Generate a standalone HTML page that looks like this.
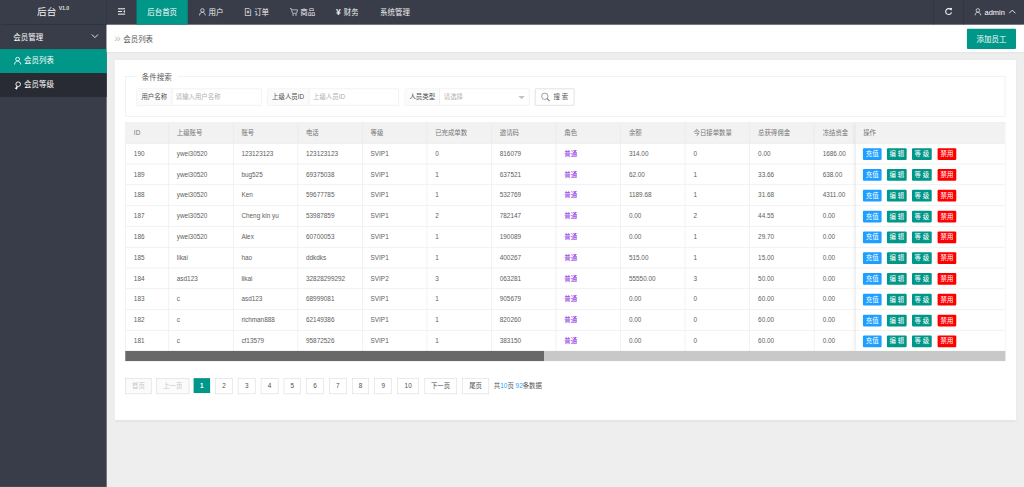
<!DOCTYPE html><html lang="zh"><head><meta charset="utf-8"><title>后台</title><style>
*{box-sizing:border-box;margin:0;padding:0}
html,body{width:1024px;height:487px;overflow:hidden;background:#eee}
body{font-family:"Liberation Sans","Noto Sans CJK SC",sans-serif;font-size:14px;color:#333;}
#root{position:absolute;left:0;top:0;width:1920px;height:913px;transform:scale(0.533333);transform-origin:0 0;background:#eee;overflow:hidden}
.abs{position:absolute}
.header{position:absolute;left:0;top:0;width:1920px;height:46px;background:#393D49;box-shadow:0 1px 2px rgba(0,0,0,.25);z-index:5}
.logo{position:absolute;left:0;top:0;width:200px;height:46px;color:#fff;border-right:1px solid #30333d}
.logo .t{position:absolute;left:69.5px;top:7px;font-size:18px;line-height:30px;color:#f2f2f2;white-space:nowrap}
.logo .v{position:absolute;left:110px;top:10px;font-size:10px;font-weight:bold;line-height:12px;color:#ddd;letter-spacing:-0.3px}
.nav{position:absolute;top:0;height:46px;line-height:47px;color:#f0f0f0;font-size:14px;white-space:nowrap}
.nav.act{background:#009688;color:#fff}
.side{position:absolute;left:0;top:0;width:200px;height:913px;background:#393D49;padding-top:46px}
.side .m{position:absolute;left:0;width:200px;height:45px;line-height:49px;color:#fff;font-size:14px;white-space:nowrap}
.bar{position:absolute;left:200px;top:40px;width:1720px;height:57.5px;background:#fff;box-shadow:0 1px 3px rgba(0,0,0,.18)}
.card{position:absolute;left:215px;top:112px;width:1690px;height:676px;background:#fff;box-shadow:0 1px 4px rgba(0,0,0,.12)}
.fs{position:absolute;left:235px;top:143px;width:1650px;height:76px;border:1px solid #e6e6e6}
.lg{position:absolute;left:256px;top:132.5px;width:78px;height:24px;background:#fff;line-height:24px;font-size:14px;color:#5a5a5a;padding-left:10px;white-space:nowrap}
.grp{position:absolute;top:165.5px;height:32px;border:1px solid #e6e6e6;border-radius:2px;background:#fff}
.grp .lb{position:absolute;left:0;top:0;height:30px;line-height:30px;background:#fbfbfb;border-right:1px solid #e6e6e6;font-size:12px;color:#505050;text-align:center;white-space:nowrap}
.grp .ph{position:absolute;top:0;height:30px;line-height:30px;font-size:12px;color:#b0b0b0;white-space:nowrap}
.tbl{position:absolute;left:235px;top:228.6px;width:1650px;height:448px;border:1px solid #e6e6e6;overflow:hidden;background:#fff}
.tr{position:absolute;left:0;width:1650px;height:39px;border-bottom:1px solid #e6e6e6}
.th{background:#f2f2f2}
.td{position:absolute;top:0;height:38px;line-height:38px;padding-left:15px;font-size:12px;color:#606060;border-right:1px solid #e6e6e6;white-space:nowrap;overflow:hidden}
.th .td{color:#757575}
.pu{color:#8a2be2}
.fix{position:absolute;left:1368px;top:0;width:281px;height:429px;background:#fff;box-shadow:-1px 0 8px rgba(0,0,0,.12);border-left:1px solid #e6e6e6}
.fix .r{position:absolute;left:0;width:281px;height:39px;border-bottom:1px solid #e6e6e6}
.b{position:absolute;top:9px;height:22px;line-height:22px;font-size:12px;color:#fff;text-align:center;border-radius:2px;white-space:nowrap}
.pg{position:absolute;top:708.6px;height:30px;line-height:28px;border:1px solid #d8d8d8;font-size:12px;color:#505050;text-align:center;background:#fff;white-space:nowrap}
.pg.dis{color:#c6c6c6;background:#fbfbfb}
</style></head><body><div id="root">
<div class="side">
<div class="m" style="top:46px;height:46px;line-height:48px"><span class="abs" style="left:25px">会员管理</span><svg class="abs" style="left:171px;top:17px" width="14" height="10" viewBox="0 0 14 10"><path d="M1 1.5 L7 7.5 L13 1.5" fill="none" stroke="#f4f4f4" stroke-width="1.7"/></svg></div>
<div class="m" style="top:92px;background:#009688;line-height:45px"><svg class="abs" style="left:25.5px;top:14px" width="14" height="16.2" viewBox="0 0 13 15"><circle cx="6.5" cy="4.5" r="3.3" fill="none" stroke="#fff" stroke-width="1.5"/><path d="M1 14 C1.5 9.5 4 8 6.5 8 C9 8 11.500 9.500 12 14" fill="none" stroke="#fff" stroke-width="1.5"/></svg><span class="abs" style="left:45px">会员列表</span></div>
<div class="m" style="top:137px;background:#282B33;line-height:45px"><svg class="abs" style="left:25.5px;top:14.5px" width="14" height="17.2" viewBox="0 0 13 16"><circle cx="7.5" cy="5.5" r="4" fill="none" stroke="#fff" stroke-width="1.6"/><path d="M4.500 9 L1.500 14 L4 13.500 L5 15.500 L7 10" fill="#fff" stroke="none"/></svg><span class="abs" style="left:45px">会员等级</span></div>
</div>
<div class="header">
<div class="logo"><span class="t">后台</span><span class="v">V1.0</span></div>
<svg class="abs" style="left:221px;top:15px" width="14" height="13" viewBox="0 0 14 13"><rect x="0" y="0.5" width="14" height="2" fill="#eee"/><rect x="0" y="5.500" width="8" height="2" fill="#eee"/><rect x="0" y="10.500" width="14" height="2" fill="#eee"/><path d="M13.500 3.800 L13.500 9.200 L10 6.500 Z" fill="#eee"/></svg>
<div class="nav act" style="left:256px;width:96px;text-align:center">后台首页</div>
<svg class="abs" style="left:373px;top:15px" width="13" height="15" viewBox="0 0 13 15"><circle cx="6.5" cy="4.500" r="3.300" fill="none" stroke="#e6e6e6" stroke-width="1.500"/><path d="M1 14 C1.500 9.500 4 8 6.500 8 C9 8 11.500 9.500 12 14" fill="none" stroke="#e6e6e6" stroke-width="1.500"/></svg>
<div class="nav" style="left:391px">用户</div>
<svg class="abs" style="left:458px;top:15px" width="14" height="15" viewBox="0 0 14 15"><path d="M1.800 0.800 H9 L12.200 4 V14.200 H1.800 Z" fill="none" stroke="#e6e6e6" stroke-width="1.500"/><rect x="4.500" y="5" width="5" height="5" fill="#e6e6e6" opacity=".7"/></svg>
<div class="nav" style="left:476.5px">订单</div>
<svg class="abs" style="left:543px;top:15px" width="16" height="15" viewBox="0 0 16 15"><path d="M0.500 1 H3 L5.500 10 H13 L15 3.500 H4" fill="none" stroke="#e6e6e6" stroke-width="1.300"/><circle cx="6.500" cy="13" r="1.300" fill="#e6e6e6"/><circle cx="12" cy="13" r="1.300" fill="#e6e6e6"/></svg>
<div class="nav" style="left:563px">商品</div>
<div class="nav" style="left:630px;font-weight:bold;font-size:16px">¥</div>
<div class="nav" style="left:644.5px">财务</div>
<div class="nav" style="left:712.5px">系统管理</div>
<div class="abs" style="left:1750px;top:0;width:1px;height:46px;background:#2f323c"></div>
<div class="abs" style="left:1806px;top:0;width:1px;height:46px;background:#2f323c"></div>
<svg class="abs" style="left:1771px;top:14px" width="15" height="15" viewBox="0 0 15 15"><path d="M12.200 4.500 A5.500 5.500 0 1 0 13 9" fill="none" stroke="#f0f0f0" stroke-width="2"/><path d="M9 0.500 L14 1 L13 6 Z" fill="#f0f0f0"/></svg>
<svg class="abs" style="left:1827px;top:15px" width="13" height="15" viewBox="0 0 13 15"><circle cx="6.5" cy="4.500" r="3.300" fill="none" stroke="#e6e6e6" stroke-width="1.500"/><path d="M1 14 C1.500 9.500 4 8 6.500 8 C9 8 11.500 9.500 12 14" fill="none" stroke="#e6e6e6" stroke-width="1.500"/></svg>
<div class="nav" style="left:1846px;color:#fff">admin</div>
<svg class="abs" style="left:1891px;top:17px" width="14" height="10" viewBox="0 0 14 10"><path d="M1 8 L7 2 L13 8" fill="none" stroke="#f4f4f4" stroke-width="1.700"/></svg>
</div>
<div class="bar"><span class="abs" style="left:14px;top:6px;line-height:49px;font-size:22px;color:#c4c4c4">»</span><span class="abs" style="left:31px;top:6px;line-height:54px;font-size:14px;color:#555;white-space:nowrap">会员列表</span>
<div class="abs" style="left:1613px;top:14px;width:92px;height:38px;line-height:39px;background:#009688;color:#fff;text-align:center;font-size:14px;border-radius:2px">添加员工</div></div>
<div class="card"></div>
<div class="fs"></div><div class="lg">条件搜索</div>
<div class="grp" style="left:256px;width:234.500px"><div class="lb" style="width:65.500px">用户名称</div><div class="ph" style="left:72.5px">请输入用户名称</div></div>
<div class="grp" style="left:501px;width:246.500px"><div class="lb" style="width:77.500px">上级人员ID</div><div class="ph" style="left:85px">上级人员ID</div></div>
<div class="grp" style="left:758.500px;width:234.500px"><div class="lb" style="width:65.500px">人员类型</div><div class="ph" style="left:72.5px">请选择</div><div class="abs" style="left:212px;top:13px;width:0;height:0;border:6px solid transparent;border-top-color:#c2c2c2"></div></div>
<div class="abs" style="left:1003px;top:165.500px;width:74px;height:32px;border:1px solid #c9c9c9;border-radius:2px;background:#fff"><svg class="abs" style="left:10px;top:6px" width="18" height="18" viewBox="0 0 18 18"><circle cx="7.500" cy="7.500" r="6" fill="none" stroke="#777" stroke-width="1.300"/><path d="M11.500 11.500 L16.500 16.500" stroke="#777" stroke-width="2"/></svg><span class="abs" style="left:34px;top:0;line-height:30px;font-size:12px;color:#555;white-space:nowrap">搜 索</span></div>
<div class="tbl">
<div class="tr th" style="top:0px"><div class="td" style="left:0.0px;width:80.5px">ID</div><div class="td" style="left:80.5px;width:121.1px">上级账号</div><div class="td" style="left:201.6px;width:121.1px">账号</div><div class="td" style="left:322.7px;width:121.1px">电话</div><div class="td" style="left:443.8px;width:121.1px">等级</div><div class="td" style="left:564.9px;width:121.1px">已完成单数</div><div class="td" style="left:686.0px;width:121.1px">邀请码</div><div class="td" style="left:807.1px;width:121.1px">角色</div><div class="td" style="left:928.2px;width:121.1px">余额</div><div class="td" style="left:1049.3px;width:121.1px">今日接单数量</div><div class="td" style="left:1170.4px;width:121.1px">总获得佣金</div><div class="td" style="left:1291.5px;width:121.1px">冻结资金</div></div>
<div class="tr " style="top:39px"><div class="td" style="left:0.0px;width:80.5px">190</div><div class="td" style="left:80.5px;width:121.1px">ywei30520</div><div class="td" style="left:201.6px;width:121.1px">123123123</div><div class="td" style="left:322.7px;width:121.1px">123123123</div><div class="td" style="left:443.8px;width:121.1px">SVIP1</div><div class="td" style="left:564.9px;width:121.1px">0</div><div class="td" style="left:686.0px;width:121.1px">816079</div><div class="td pu" style="left:807.1px;width:121.1px">普通</div><div class="td" style="left:928.2px;width:121.1px">314.00</div><div class="td" style="left:1049.3px;width:121.1px">0</div><div class="td" style="left:1170.4px;width:121.1px">0.00</div><div class="td" style="left:1291.5px;width:121.1px">1686.00</div></div>
<div class="tr " style="top:78px"><div class="td" style="left:0.0px;width:80.5px">189</div><div class="td" style="left:80.5px;width:121.1px">ywei30520</div><div class="td" style="left:201.6px;width:121.1px">bug525</div><div class="td" style="left:322.7px;width:121.1px">69375038</div><div class="td" style="left:443.8px;width:121.1px">SVIP1</div><div class="td" style="left:564.9px;width:121.1px">1</div><div class="td" style="left:686.0px;width:121.1px">637521</div><div class="td pu" style="left:807.1px;width:121.1px">普通</div><div class="td" style="left:928.2px;width:121.1px">62.00</div><div class="td" style="left:1049.3px;width:121.1px">1</div><div class="td" style="left:1170.4px;width:121.1px">33.66</div><div class="td" style="left:1291.5px;width:121.1px">638.00</div></div>
<div class="tr " style="top:117px"><div class="td" style="left:0.0px;width:80.5px">188</div><div class="td" style="left:80.5px;width:121.1px">ywei30520</div><div class="td" style="left:201.6px;width:121.1px">Ken</div><div class="td" style="left:322.7px;width:121.1px">59677785</div><div class="td" style="left:443.8px;width:121.1px">SVIP1</div><div class="td" style="left:564.9px;width:121.1px">1</div><div class="td" style="left:686.0px;width:121.1px">532769</div><div class="td pu" style="left:807.1px;width:121.1px">普通</div><div class="td" style="left:928.2px;width:121.1px">1189.68</div><div class="td" style="left:1049.3px;width:121.1px">1</div><div class="td" style="left:1170.4px;width:121.1px">31.68</div><div class="td" style="left:1291.5px;width:121.1px">4311.00</div></div>
<div class="tr " style="top:156px"><div class="td" style="left:0.0px;width:80.5px">187</div><div class="td" style="left:80.5px;width:121.1px">ywei30520</div><div class="td" style="left:201.6px;width:121.1px">Cheng kin yu</div><div class="td" style="left:322.7px;width:121.1px">53987859</div><div class="td" style="left:443.8px;width:121.1px">SVIP1</div><div class="td" style="left:564.9px;width:121.1px">2</div><div class="td" style="left:686.0px;width:121.1px">782147</div><div class="td pu" style="left:807.1px;width:121.1px">普通</div><div class="td" style="left:928.2px;width:121.1px">0.00</div><div class="td" style="left:1049.3px;width:121.1px">2</div><div class="td" style="left:1170.4px;width:121.1px">44.55</div><div class="td" style="left:1291.5px;width:121.1px">0.00</div></div>
<div class="tr " style="top:195px"><div class="td" style="left:0.0px;width:80.5px">186</div><div class="td" style="left:80.5px;width:121.1px">ywei30520</div><div class="td" style="left:201.6px;width:121.1px">Alex</div><div class="td" style="left:322.7px;width:121.1px">60700053</div><div class="td" style="left:443.8px;width:121.1px">SVIP1</div><div class="td" style="left:564.9px;width:121.1px">1</div><div class="td" style="left:686.0px;width:121.1px">190089</div><div class="td pu" style="left:807.1px;width:121.1px">普通</div><div class="td" style="left:928.2px;width:121.1px">0.00</div><div class="td" style="left:1049.3px;width:121.1px">1</div><div class="td" style="left:1170.4px;width:121.1px">29.70</div><div class="td" style="left:1291.5px;width:121.1px">0.00</div></div>
<div class="tr " style="top:234px"><div class="td" style="left:0.0px;width:80.5px">185</div><div class="td" style="left:80.5px;width:121.1px">likai</div><div class="td" style="left:201.6px;width:121.1px">hao</div><div class="td" style="left:322.7px;width:121.1px">ddkdks</div><div class="td" style="left:443.8px;width:121.1px">SVIP1</div><div class="td" style="left:564.9px;width:121.1px">1</div><div class="td" style="left:686.0px;width:121.1px">400267</div><div class="td pu" style="left:807.1px;width:121.1px">普通</div><div class="td" style="left:928.2px;width:121.1px">515.00</div><div class="td" style="left:1049.3px;width:121.1px">1</div><div class="td" style="left:1170.4px;width:121.1px">15.00</div><div class="td" style="left:1291.5px;width:121.1px">0.00</div></div>
<div class="tr " style="top:273px"><div class="td" style="left:0.0px;width:80.5px">184</div><div class="td" style="left:80.5px;width:121.1px">asd123</div><div class="td" style="left:201.6px;width:121.1px">likai</div><div class="td" style="left:322.7px;width:121.1px">32828299292</div><div class="td" style="left:443.8px;width:121.1px">SVIP2</div><div class="td" style="left:564.9px;width:121.1px">3</div><div class="td" style="left:686.0px;width:121.1px">063281</div><div class="td pu" style="left:807.1px;width:121.1px">普通</div><div class="td" style="left:928.2px;width:121.1px">55550.00</div><div class="td" style="left:1049.3px;width:121.1px">3</div><div class="td" style="left:1170.4px;width:121.1px">50.00</div><div class="td" style="left:1291.5px;width:121.1px">0.00</div></div>
<div class="tr " style="top:312px"><div class="td" style="left:0.0px;width:80.5px">183</div><div class="td" style="left:80.5px;width:121.1px">c</div><div class="td" style="left:201.6px;width:121.1px">asd123</div><div class="td" style="left:322.7px;width:121.1px">68999081</div><div class="td" style="left:443.8px;width:121.1px">SVIP1</div><div class="td" style="left:564.9px;width:121.1px">1</div><div class="td" style="left:686.0px;width:121.1px">905679</div><div class="td pu" style="left:807.1px;width:121.1px">普通</div><div class="td" style="left:928.2px;width:121.1px">0.00</div><div class="td" style="left:1049.3px;width:121.1px">0</div><div class="td" style="left:1170.4px;width:121.1px">60.00</div><div class="td" style="left:1291.5px;width:121.1px">0.00</div></div>
<div class="tr " style="top:351px"><div class="td" style="left:0.0px;width:80.5px">182</div><div class="td" style="left:80.5px;width:121.1px">c</div><div class="td" style="left:201.6px;width:121.1px">richman888</div><div class="td" style="left:322.7px;width:121.1px">62149386</div><div class="td" style="left:443.8px;width:121.1px">SVIP1</div><div class="td" style="left:564.9px;width:121.1px">1</div><div class="td" style="left:686.0px;width:121.1px">820260</div><div class="td pu" style="left:807.1px;width:121.1px">普通</div><div class="td" style="left:928.2px;width:121.1px">0.00</div><div class="td" style="left:1049.3px;width:121.1px">0</div><div class="td" style="left:1170.4px;width:121.1px">60.00</div><div class="td" style="left:1291.5px;width:121.1px">0.00</div></div>
<div class="tr " style="top:390px"><div class="td" style="left:0.0px;width:80.5px">181</div><div class="td" style="left:80.5px;width:121.1px">c</div><div class="td" style="left:201.6px;width:121.1px">cf13579</div><div class="td" style="left:322.7px;width:121.1px">95872526</div><div class="td" style="left:443.8px;width:121.1px">SVIP1</div><div class="td" style="left:564.9px;width:121.1px">1</div><div class="td" style="left:686.0px;width:121.1px">383150</div><div class="td pu" style="left:807.1px;width:121.1px">普通</div><div class="td" style="left:928.2px;width:121.1px">0.00</div><div class="td" style="left:1049.3px;width:121.1px">0</div><div class="td" style="left:1170.4px;width:121.1px">60.00</div><div class="td" style="left:1291.5px;width:121.1px">0.00</div></div>
<div class="fix">
<div class="r" style="top:0;background:#f2f2f2"><span class="abs" style="left:13.5px;line-height:38px;font-size:12px;color:#757575">操作</span></div>
<div class="r" style="top:39px"><span class="b" style="left:13px;width:35px;background:#1E9FFF">充值</span><span class="b" style="left:58px;width:37px;background:#009688">编 辑</span><span class="b" style="left:105px;width:37px;background:#009688">等 级</span><span class="b" style="left:153px;width:35px;background:#FF0000">禁用</span></div>
<div class="r" style="top:78px"><span class="b" style="left:13px;width:35px;background:#1E9FFF">充值</span><span class="b" style="left:58px;width:37px;background:#009688">编 辑</span><span class="b" style="left:105px;width:37px;background:#009688">等 级</span><span class="b" style="left:153px;width:35px;background:#FF0000">禁用</span></div>
<div class="r" style="top:117px"><span class="b" style="left:13px;width:35px;background:#1E9FFF">充值</span><span class="b" style="left:58px;width:37px;background:#009688">编 辑</span><span class="b" style="left:105px;width:37px;background:#009688">等 级</span><span class="b" style="left:153px;width:35px;background:#FF0000">禁用</span></div>
<div class="r" style="top:156px"><span class="b" style="left:13px;width:35px;background:#1E9FFF">充值</span><span class="b" style="left:58px;width:37px;background:#009688">编 辑</span><span class="b" style="left:105px;width:37px;background:#009688">等 级</span><span class="b" style="left:153px;width:35px;background:#FF0000">禁用</span></div>
<div class="r" style="top:195px"><span class="b" style="left:13px;width:35px;background:#1E9FFF">充值</span><span class="b" style="left:58px;width:37px;background:#009688">编 辑</span><span class="b" style="left:105px;width:37px;background:#009688">等 级</span><span class="b" style="left:153px;width:35px;background:#FF0000">禁用</span></div>
<div class="r" style="top:234px"><span class="b" style="left:13px;width:35px;background:#1E9FFF">充值</span><span class="b" style="left:58px;width:37px;background:#009688">编 辑</span><span class="b" style="left:105px;width:37px;background:#009688">等 级</span><span class="b" style="left:153px;width:35px;background:#FF0000">禁用</span></div>
<div class="r" style="top:273px"><span class="b" style="left:13px;width:35px;background:#1E9FFF">充值</span><span class="b" style="left:58px;width:37px;background:#009688">编 辑</span><span class="b" style="left:105px;width:37px;background:#009688">等 级</span><span class="b" style="left:153px;width:35px;background:#FF0000">禁用</span></div>
<div class="r" style="top:312px"><span class="b" style="left:13px;width:35px;background:#1E9FFF">充值</span><span class="b" style="left:58px;width:37px;background:#009688">编 辑</span><span class="b" style="left:105px;width:37px;background:#009688">等 级</span><span class="b" style="left:153px;width:35px;background:#FF0000">禁用</span></div>
<div class="r" style="top:351px"><span class="b" style="left:13px;width:35px;background:#1E9FFF">充值</span><span class="b" style="left:58px;width:37px;background:#009688">编 辑</span><span class="b" style="left:105px;width:37px;background:#009688">等 级</span><span class="b" style="left:153px;width:35px;background:#FF0000">禁用</span></div>
<div class="r" style="top:390px"><span class="b" style="left:13px;width:35px;background:#1E9FFF">充值</span><span class="b" style="left:58px;width:37px;background:#009688">编 辑</span><span class="b" style="left:105px;width:37px;background:#009688">等 级</span><span class="b" style="left:153px;width:35px;background:#FF0000">禁用</span></div>
</div>
</div>
<div class="abs" style="left:235px;top:658px;width:1650px;height:19px;background:#c8c8c8"></div>
<div class="abs" style="left:235px;top:658px;width:785px;height:19px;background:#686868"></div>
<div class="pg dis" style="left:234.800px;width:49.700px">首页</div>
<div class="pg dis" style="left:292.700px;width:62.600px">上一页</div>
<div class="pg" style="left:362.800px;width:31px;height:28.500px;border:none;background:#009688;color:#fff;font-weight:bold">1</div>
<div class="pg" style="left:403.6px;width:32.800px">2</div>
<div class="pg" style="left:446.3px;width:32.800px">3</div>
<div class="pg" style="left:488.9px;width:32.800px">4</div>
<div class="pg" style="left:531.6px;width:32.800px">5</div>
<div class="pg" style="left:574.3px;width:32.800px">6</div>
<div class="pg" style="left:616.9px;width:32.800px">7</div>
<div class="pg" style="left:659.6px;width:32.800px">8</div>
<div class="pg" style="left:702.3px;width:32.800px">9</div>
<div class="pg" style="left:745.300px;width:40px">10</div>
<div class="pg" style="left:795.500px;width:61px">下一页</div>
<div class="pg" style="left:866.700px;width:50px">尾页</div>
<div class="abs" style="left:926px;top:708.6px;line-height:30px;font-size:12px;color:#555;white-space:nowrap">共<span style="color:#1E9FFF">10</span>页 <span style="color:#1E9FFF">92</span>条数据</div>
</div></body></html>
